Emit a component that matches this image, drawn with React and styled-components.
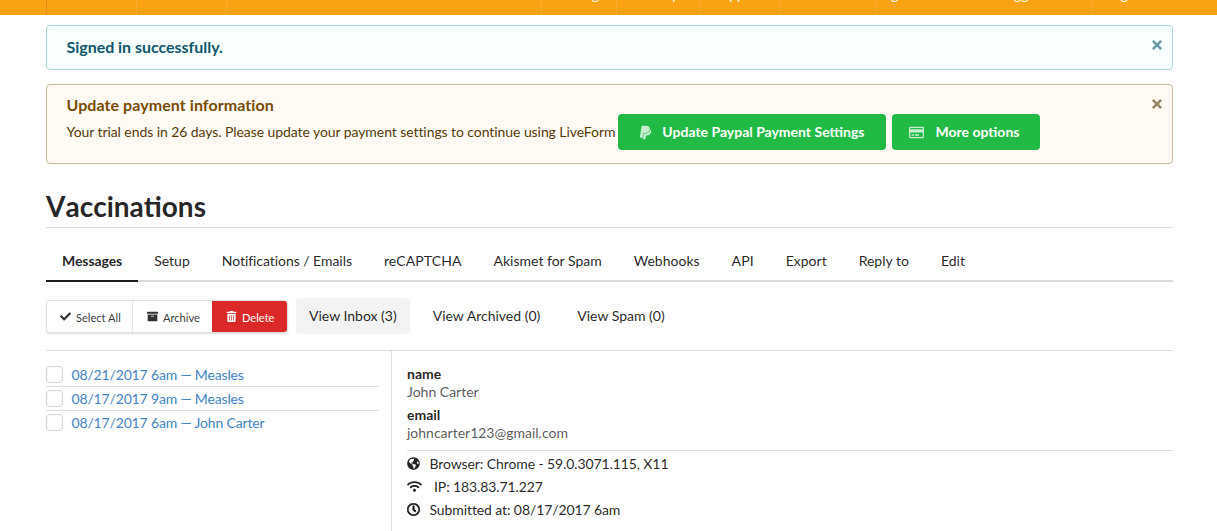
import React from "react";
import styled, { createGlobalStyle } from "styled-components";
import {
  FaTimes, FaPaypal, FaRegCreditCard, FaCheck, FaArchive, FaTrashAlt,
  FaGlobeAmericas, FaWifi, FaRegClock,
} from "react-icons/fa";

const Global = createGlobalStyle`
  html, body { margin: 0; padding: 0; background: #fff; overflow: hidden; }
  body { font-family: Lato, "Helvetica Neue", Arial, sans-serif; font-size: 14px; line-height: 20px; color: rgba(0,0,0,.87); }
  * { box-sizing: border-box; }
`;

const TopBar = styled.header`
  display: flex; height: 50px; margin-top: -35px; padding-left: 46px;
  background: #f9a313; color: #fff;
`;
const TopItem = styled.div`
  width: ${(p) => p.$w}px; padding: 20px 0 0 14px; white-space: nowrap;
  border-left: 1px solid rgba(255,255,255,.1);
  &:first-child { border-left-color: rgba(0,0,0,.1); }
`;
const TopSpacer = styled.div`
  width: 315px; border-left: 1px solid rgba(255,255,255,.1);
`;

const Container = styled.main`
  width: 1127px; margin: 0 0 0 46px;
`;
const Alert = styled.div`
  position: relative; margin-top: ${(p) => p.$mt}px; height: ${(p) => p.$h}px;
  padding: ${(p) => p.$pt}px 20px 0 19.5px;
  background: ${(p) => p.$bg}; color: ${(p) => p.$fg};
  border: 1px solid ${(p) => p.$line}; border-radius: 4px;
`;
const AlertTitle = styled.div`
  font-weight: 700; font-size: 16px; line-height: 20px; letter-spacing: ${(p) => p.$ls}px; color: ${(p) => p.$fg};
`;
const Close = styled.span`
  position: absolute; top: ${(p) => p.$top}px; right: 8px; display: flex; opacity: .6;
  color: ${(p) => p.$fg}; font-size: 14px;
`;
const AlertRow = styled.div`
  display: flex; align-items: center; margin-top: -1px; white-space: nowrap; letter-spacing: -.075px;
`;
const GreenButton = styled.button`
  display: inline-flex; align-items: center; height: 36px; margin-left: ${(p) => p.$ml}px;
  padding: 0 ${(p) => p.$pr}px 0 ${(p) => p.$pl}px; border: 0; border-radius: 4px; background: #21ba45; color: #fff;
  font: 700 14px/20px Lato, sans-serif;
  svg { opacity: .75; margin-right: ${(p) => p.$gap}px; font-size: 15px; flex: none; }
`;

const Title = styled.h1`
  margin: 25px 0 0; height: 39px; font-size: 28px; line-height: 34px; font-weight: 700; font-kerning: none;
  color: rgba(0,0,0,.87); border-bottom: 1px solid rgba(34,36,38,.15);
`;
const Tabs = styled.nav`
  display: flex; margin-top: 12px; border-bottom: 2px solid #d9d9d9;
`;
const Tab = styled.div`
  padding: 11px 16px 11px; height: 42px; margin-bottom: -2px;
  font-weight: ${(p) => (p.$active ? 700 : 400)};
  letter-spacing: ${(p) => p.$ls}px;
  border-bottom: 2px solid ${(p) => (p.$active ? "#1b1c1d" : "transparent")};
`;

const Toolbar = styled.div`
  display: flex; align-items: center; height: 36px; margin-top: 16px;
`;
const Group = styled.div`
  display: flex; height: 33px; border-radius: 4px; overflow: hidden;
  border: 1px solid rgba(34,36,38,.15);
  box-shadow: 0 1px 2px rgba(34,36,38,.15);
`;
const GroupButton = styled.div`
  display: flex; align-items: center; width: ${(p) => p.$w}px; padding: 3px 0 0 ${(p) => p.$pad}px;
  font-size: 11.1px; line-height: 1; white-space: nowrap;
  background: ${(p) => (p.$danger ? "#db2828" : "#fff")};
  color: ${(p) => (p.$danger ? "#fff" : "rgba(0,0,0,.8)")};
  border-left: ${(p) => (p.$divide ? "1px solid rgba(34,36,38,.12)" : "0")};
  svg { margin-right: ${(p) => p.$gap}px; font-size: 11px; margin-top: -2px; }
`;
const ViewButton = styled.div`
  height: 36px; padding: 8px 13px; border-radius: 4px; white-space: nowrap;
  background: ${(p) => (p.$active ? "#f3f3f3" : "transparent")};
  margin-left: ${(p) => p.$ml}px;
`;

const Split = styled.section`
  display: grid; grid-template-columns: 345px 1fr; margin-top: 16px;
  border-top: 1px solid rgba(34,36,38,.15); height: 190px;
`;
const MessageList = styled.ul`
  list-style: none; margin: 0; padding: 12px 13px 0 0;
  border-right: 1px solid rgba(34,36,38,.15); width: 346px;
`;
const MessageRow = styled.li`
  display: flex; align-items: center; height: 23px; gap: 8.5px;
  & + & { border-top: 1px solid rgba(34,36,38,.15); height: 24px; }
`;
const Check = styled.span`
  width: 17px; height: 17px; flex: none; border: 1px solid #d4d4d5; border-radius: 4px; background: #fff;
`;
const MessageLink = styled.a`
  color: #4183c4; text-decoration: none; white-space: nowrap; letter-spacing: -.16px;
`;
const Details = styled.div`
  padding: 13px 0 0 16px;
`;
const FieldName = styled.div`
  font-weight: 700; line-height: 20px; margin-top: ${(p) => p.$mt || 0}px;
`;
const FieldValue = styled.div`
  color: rgba(0,0,0,.68); line-height: 16px;
`;
const Meta = styled.div`
  margin-top: 9px; padding-top: 1px; border-top: 1px solid rgba(34,36,38,.15); letter-spacing: -.1px;
`;
const MetaRow = styled.div`
  display: flex; align-items: center; height: 23px; white-space: nowrap;
  svg {
    font-size: ${(p) => p.$size ?? 13}px; width: ${(p) => p.$size ?? 13}px;
    margin-right: ${(p) => p.$gap ?? 9.5}px; flex: none;
    stroke: currentColor; stroke-width: ${(p) => p.$stroke ?? 0};
  }
`;

const tabs = [
  ["Messages", -0.08], ["Setup", 0], ["Notifications / Emails", -0.05], ["reCAPTCHA", 0.1],
  ["Akismet for Spam", 0], ["Webhooks", 0], ["API", 0.1], ["Export", 0], ["Reply to", 0], ["Edit", 0],
];
const messages = ["08/21/2017 6am — Measles", "08/17/2017 9am — Measles", "08/17/2017 6am — John Carter"];

export default function App() {
  return (
    <>
      <Global />
      <TopBar>
        <TopItem $w={90} />
        <TopItem $w={90} />
        <TopSpacer />
        <TopItem $w={75}>Settings</TopItem>
        <TopItem $w={83}>&#9675;&nbsp; &nbsp;Help</TopItem>
        <TopItem $w={81}>Support</TopItem>
        <TopItem $w={96}>Account</TopItem>
        <TopItem $w={215}>grant M. Howard Suggs</TopItem>
        <TopItem $w={120}>Log out</TopItem>
      </TopBar>
      <Container>
        <Alert $mt={10} $h={45} $pt={11} $bg="#f8ffff" $fg="#0e566c" $line="#a9d5de">
          <AlertTitle $fg="#0e566c" $ls={-0.03}>Signed in successfully.</AlertTitle>
          <Close $top={12} $fg="#0e566c"><FaTimes /></Close>
        </Alert>
        <Alert $mt={14} $h={80} $pt={10} $bg="#fffaf3" $fg="#573a08" $line="#c9ba9b">
          <AlertTitle $fg="#794b02" $ls={0.07}>Update payment information</AlertTitle>
          <AlertRow>
            Your trial ends in 26 days. Please update your payment settings to continue using LiveForm
            <GreenButton $ml={3} $pl={20} $pr={21} $gap={9}><FaPaypal />Update Paypal Payment Settings</GreenButton>
            <GreenButton $ml={6} $pl={17} $pr={21} $gap={12}><FaRegCreditCard />More options</GreenButton>
          </AlertRow>
          <Close $top={12} $fg="#573a08"><FaTimes /></Close>
        </Alert>
        <Title>Vaccinations</Title>
        <Tabs>
          {tabs.map(([t, ls], i) => <Tab key={t} $active={i === 0} $ls={ls}>{t}</Tab>)}
        </Tabs>
        <Toolbar>
          <Group>
            <GroupButton $w={85} $pad={13} $gap={5}><FaCheck />Select All</GroupButton>
            <GroupButton $w={80} $pad={14} $gap={5} $divide><FaArchive />Archive</GroupButton>
            <GroupButton $w={75} $pad={14} $gap={5} $danger><FaTrashAlt />Delete</GroupButton>
          </Group>
          <ViewButton $active $ml={8}>View Inbox (3)</ViewButton>
          <ViewButton $ml={10}>View Archived (0)</ViewButton>
          <ViewButton $ml={11}>View Spam (0)</ViewButton>
        </Toolbar>
        <Split>
          <MessageList>
            {messages.map((m) => (
              <MessageRow key={m}><Check /><MessageLink href="#">{m}</MessageLink></MessageRow>
            ))}
          </MessageList>
          <Details>
            <FieldName>name</FieldName>
            <FieldValue>John Carter</FieldValue>
            <FieldName $mt={5}>email</FieldName>
            <FieldValue>johncarter123@gmail.com</FieldValue>
            <Meta>
              <MetaRow><FaGlobeAmericas />Browser: Chrome - 59.0.3071.115, X11</MetaRow>
              <MetaRow $gap={12} $size={15}><FaWifi />IP: 183.83.71.227</MetaRow>
              <MetaRow $stroke={24}><FaRegClock />Submitted at: 08/17/2017 6am</MetaRow>
            </Meta>
          </Details>
        </Split>
      </Container>
    </>
  );
}
